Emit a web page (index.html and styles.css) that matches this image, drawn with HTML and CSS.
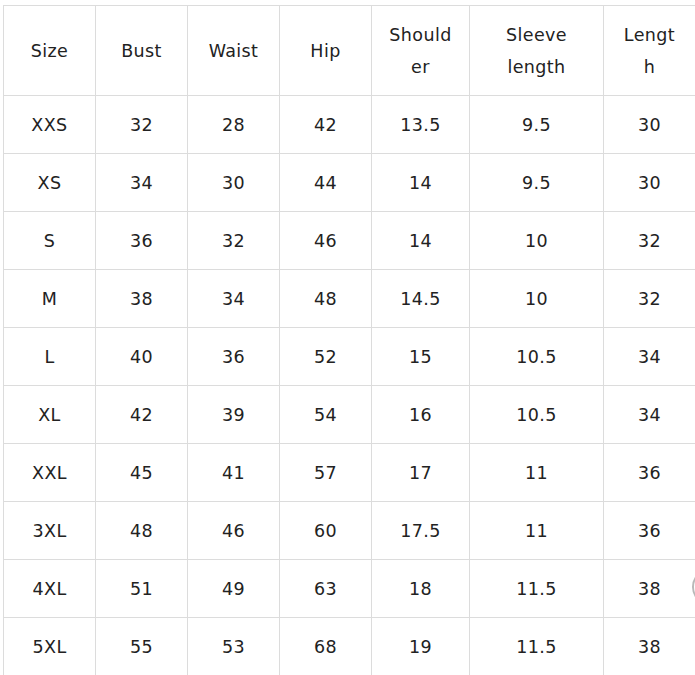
FILE: index.html
```html
<!DOCTYPE html>
<html lang="en">
<head>
<meta charset="utf-8">
<title>Size chart</title>
<link rel="stylesheet" href="styles.css">
</head>
<body>
<div class="page">
  <table class="chart">
    <colgroup>
      <col class="c-std"><col class="c-std"><col class="c-std"><col class="c-std">
      <col class="c-shoulder"><col class="c-sleeve"><col class="c-std">
    </colgroup>
    <thead>
      <tr><th>Size</th><th>Bust</th><th>Waist</th><th>Hip</th><th>Shoulder</th><th>Sleeve length</th><th>Length</th></tr>
    </thead>
    <tbody>
      <tr><td>XXS</td><td>32</td><td>28</td><td>42</td><td>13.5</td><td>9.5</td><td>30</td></tr>
      <tr><td>XS</td><td>34</td><td>30</td><td>44</td><td>14</td><td>9.5</td><td>30</td></tr>
      <tr><td>S</td><td>36</td><td>32</td><td>46</td><td>14</td><td>10</td><td>32</td></tr>
      <tr><td>M</td><td>38</td><td>34</td><td>48</td><td>14.5</td><td>10</td><td>32</td></tr>
      <tr><td>L</td><td>40</td><td>36</td><td>52</td><td>15</td><td>10.5</td><td>34</td></tr>
      <tr><td>XL</td><td>42</td><td>39</td><td>54</td><td>16</td><td>10.5</td><td>34</td></tr>
      <tr><td>XXL</td><td>45</td><td>41</td><td>57</td><td>17</td><td>11</td><td>36</td></tr>
      <tr><td>3XL</td><td>48</td><td>46</td><td>60</td><td>17.5</td><td>11</td><td>36</td></tr>
      <tr><td>4XL</td><td>51</td><td>49</td><td>63</td><td>18</td><td>11.5</td><td>38</td></tr>
      <tr><td>5XL</td><td>55</td><td>53</td><td>68</td><td>19</td><td>11.5</td><td>38</td></tr>
    </tbody>
  </table>
  <div class="fab"></div>
</div>
</body>
</html>
```
FILE: styles.css
```css
html, body {
  margin: 0;
  padding: 0;
  background: #ffffff;
  overflow: hidden;
}
.page {
  position: relative;
  width: 695px;
  height: 675px;
  overflow: hidden;
  padding: 5px 0 0 3px;
  box-sizing: border-box;
}
.chart {
  border-collapse: collapse;
  table-layout: fixed;
  width: 692px;
  font-family: "DejaVu Sans", "Liberation Sans", sans-serif;
  font-size: 17.5px;
  letter-spacing: 0.4px;
  color: #222222;
}
.c-std { width: 92px; }
.c-shoulder { width: 98px; }
.c-sleeve { width: 134px; }
.chart th,
.chart td {
  border: 1px solid #dcdcdc;
  padding: 12.5px 16px;
  line-height: 32px;
  text-align: center;
  font-weight: normal;
  overflow-wrap: anywhere;
}
.fab {
  position: absolute;
  left: 692px;
  top: 568px;
  width: 38px;
  height: 38px;
  border-radius: 50%;
  border: 2px solid #b8b8b8;
  background: #ffffff;
  box-sizing: border-box;
}
```
